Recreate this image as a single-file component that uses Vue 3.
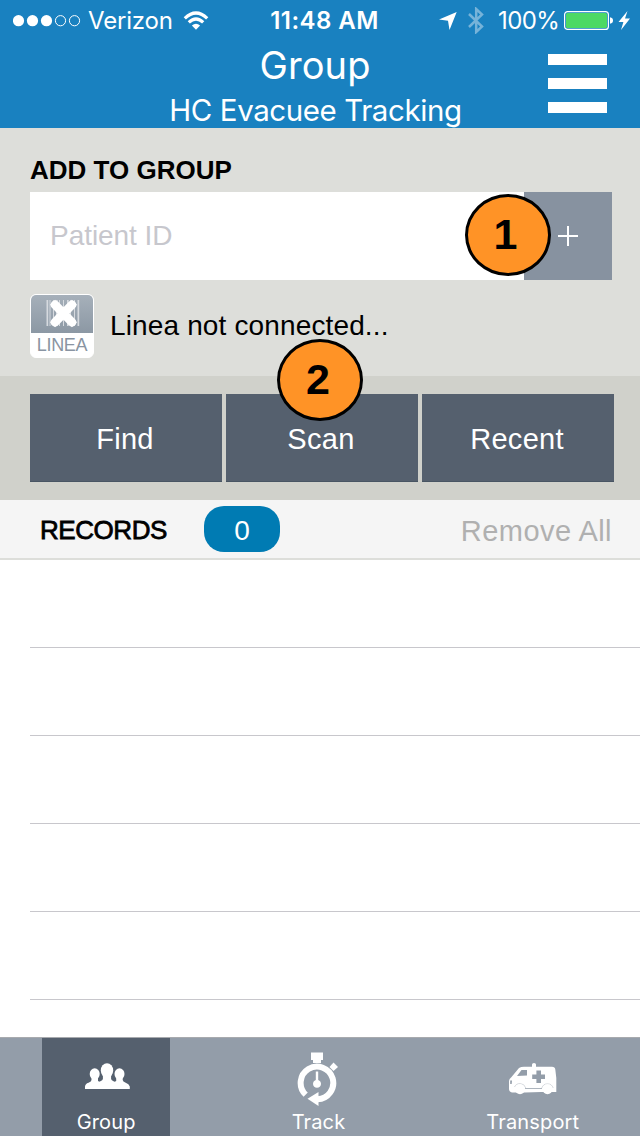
<script setup>
const actions = ['Find', 'Scan', 'Recent']
const bars = [46.5, 49.5, 53, 56, 59, 63, 67, 70, 74, 77.5]
</script>

<template>
  <div class="screen">
    <header class="header">
      <div class="status">
        <div class="left">
          <svg width="70" height="14" viewBox="0 0 70 14">
            <g fill="#fff"><circle cx="5.5" cy="6.7" r="5.6" /><circle cx="19.5" cy="6.7" r="5.6" /><circle cx="33.5" cy="6.7" r="5.6" /></g>
            <g fill="none" stroke="#fff"><circle cx="47.5" cy="6.7" r="5.1" /><circle cx="61.5" cy="6.7" r="5.1" /></g>
          </svg>
          <span class="carrier">Verizon</span>
          <svg class="wifi" width="26" height="20" viewBox="0 0 26 20">
            <g fill="none" stroke="#fff" stroke-width="3.2">
              <path d="M1.8 7.3Q13-3.4 24.2 7.3" /><path d="M5.8 11.4Q13 4.6 20.2 11.4" />
            </g>
            <path d="M8.9 14.5Q13 11 17.1 14.5L13 18.7Z" fill="#fff" />
          </svg>
        </div>
        <div class="time">11:48 AM</div>
        <div class="right">
          <svg width="18" height="18" viewBox="0 0 18 18"><path d="M17.7 0L10.5 18L9 8.8L0 7.5Z" fill="#fff" /></svg>
          <svg class="bt" width="16" height="27" viewBox="0 0 16 27"><path d="M1 7L14 19.5L8.2 25V2L14 7.5L1 20" fill="none" stroke="#76b3d9" stroke-width="2.5" /></svg>
          <span class="percent">100%</span>
          <svg class="battery" width="67" height="20" viewBox="0 0 67 20">
            <rect x=".6" y=".6" width="43.8" height="17.8" rx="3" fill="none" stroke="#fff" stroke-width="1.2" />
            <rect x="2" y="2" width="41" height="15" rx="1.5" fill="#4cd964" />
            <path d="M46 6.2Q49 6.8 49 9.5T46 12.8Z" fill="#fff" />
            <path d="M63.5 0L54.5 11H59.4L57 19L66 7.5H61Z" fill="#fff" />
          </svg>
        </div>
      </div>
      <h1>Group</h1>
      <h2>HC Evacuee Tracking</h2>
      <button class="menu" aria-label="Menu"><i></i><i></i><i></i></button>
    </header>

    <section class="add">
      <h3>ADD TO GROUP</h3>
      <div class="field">
        <span class="placeholder">Patient ID</span>
        <button class="plus" aria-label="Add">
          <svg width="20" height="20" viewBox="0 0 20 20"><path d="M0 10H20M10 0V20" stroke="#fff" stroke-width="2" /></svg>
        </button>
      </div>
      <div class="linea">
        <div class="device">
          <svg width="62" height="38" viewBox="31 295 62 38">
            <g fill="#d6dadf"><rect v-for="(x, i) in bars" :key="x" :x="x" y="300" :width="i % 3 ? 1 : 1.7" height="26" /></g>
            <path d="M55 304.8L72 322.2M72 304.8L55 322.2" stroke="#fff" stroke-width="8.8" stroke-linecap="round" />
            <path d="M55 304.8L72 322.2M72 304.8L55 322.2" stroke="#fff" stroke-width="7" stroke-linecap="square" />
          </svg>
          <span>LINEA</span>
        </div>
        <p>Linea not connected...</p>
      </div>
      <b class="marker one">1</b>
    </section>

    <section class="actions">
      <button v-for="a in actions" :key="a">{{ a }}</button>
      <b class="marker two">2</b>
    </section>

    <section class="records">
      <strong>RECORDS</strong><span class="count">0</span><span class="remove">Remove All</span>
    </section>

    <main class="list"><div v-for="n in 5" :key="n" class="row"></div></main>

    <nav class="tabs">
      <div class="tab active">
        <svg width="48" height="28" viewBox="84 1062 48 28">
          <g fill="#fff">
            <ellipse cx="94.7" cy="1074" rx="5" ry="5.8" />
            <ellipse cx="119.5" cy="1074" rx="5" ry="5.8" />
            <ellipse cx="107" cy="1070.5" rx="6.2" ry="7.3" />
            <path d="M91.5 1077H98V1081L102 1083V1089H85V1086.5Q85.3 1083.8 88.5 1082.8Q91.5 1081.8 91.5 1080Z" />
            <path d="M122.7 1077H116.2V1081L112.2 1083V1089H129.8V1086.5Q129 1083.8 125.7 1082.8Q122.7 1081.8 122.7 1080Z" />
            <path d="M102.9 1074H111.1V1079Q111.2 1080.5 114 1081.4Q118.5 1083 118.5 1089H95.5Q95.5 1083 100 1081.4Q102.8 1080.5 102.9 1079Z" />
          </g>
        </svg>
        <span>Group</span>
      </div>
      <div class="tab track">
        <svg width="42" height="56" viewBox="297 1051 42 56">
          <g fill="#fff">
            <path d="M311 1052.5H323V1060H321V1063H313V1060H311Z" />
            <path d="M333.5 1062.5L338 1067L333.5 1071L329.5 1067Z" />
            <path d="M318.5 1099.5V1106L307.5 1098.8L318.5 1092V1096Z" />
            <path d="M315.8 1071.5H318.2V1080Q321 1081 321 1084Q320.5 1087.8 317 1087.8T313 1084Q313 1081 315.8 1080Z" />
          </g>
          <path d="M305.7 1094.7A16.3 16.3 0 1 1 317.5 1099.2" fill="none" stroke="#fff" stroke-width="6" />
        </svg>
        <span>Track</span>
      </div>
      <div class="tab transport">
        <svg width="50" height="34" viewBox="508 1062 50 34">
          <path d="M519 1068Q521 1066.7 524 1066.7H532V1064.5Q532 1063 534 1063T536 1064.5V1066.7H552Q555 1066.7 555.3 1069.5L556.3 1078V1092H541L525 1092.5H512Q509 1091.5 509 1089V1081Q509 1079 511.5 1077Z" fill="#fff" />
          <path d="M517 1076L521.5 1070H527V1075.5ZM510.2 1080.5H512L511.7 1084H510.2ZM536.4 1070.5H541V1074.5H545V1079H541V1083H536.4V1079H532.2V1074.5H536.4ZM525 1088H542V1088.8H525Z" fill="#939da9" />
          <path d="M514.5 1087A6 6 0 0 1 525.7 1088M541.8 1088A6 6 0 0 1 553.2 1088" fill="none" stroke="#c3c9d0" stroke-width=".7" />
          <circle cx="520" cy="1089.3" r="5" fill="#fff" /><circle cx="547.5" cy="1089.3" r="5" fill="#fff" />
        </svg>
        <span>Transport</span>
      </div>
    </nav>
  </div>
</template>

<style>
body { margin: 0; }
</style>

<style scoped>
* { box-sizing: border-box; }
svg { display: block; flex: none; }
button { border: 0; border-radius: 0; padding: 0; margin: 0; }
h1, h2, h3, p { margin: 0; font-weight: 400; white-space: nowrap; }
.screen { width: 640px; height: 1136px; display: flex; flex-direction: column; overflow: hidden; background: #fff; font-family: "Liberation Sans", sans-serif; color: #000; }
.header { position: relative; height: 128px; flex: none; background: #1981c0; color: #fff; font-family: Inter, sans-serif; text-align: center; }
.status { height: 40px; display: grid; grid-template-columns: 240px 168px 232px; align-items: center; font-size: 24px; line-height: 40px; }
.left, .right { display: flex; align-items: center; }
.left { padding-left: 13px; }
.carrier { width: 96px; padding: 1px 0 0 5px; text-align: left; letter-spacing: -.2px; }
.wifi { margin-left: 4px; }
.time { font-weight: 600; letter-spacing: .45px; white-space: nowrap; padding: 1px 0 0 1px; }
.right { padding-left: 31px; }
.bt { margin-left: 11px; }
.percent { width: 64px; margin-left: 14px; padding-top: 1px; text-align: left; letter-spacing: -.6px; }
.battery { margin-left: 2px; }
h1 { height: 50px; line-height: 50px; font-size: 38px; letter-spacing: .1px; text-indent: -10px; }
h2 { height: 38px; line-height: 41px; font-size: 29.5px; letter-spacing: -.42px; text-indent: -9px; }
.menu { position: absolute; left: 548px; top: 54px; width: 59px; height: 59px; background: none; display: flex; flex-direction: column; justify-content: space-between; }
.menu i { width: 59px; height: 11px; background: #fff; }
.add { position: relative; height: 248px; flex: none; padding: 22px 28px 0 30px; background: #dddeda; }
h3 { height: 42px; line-height: 41px; font-size: 26px; font-weight: 700; letter-spacing: 0; }
.field { height: 88px; display: flex; justify-content: space-between; background: #fff; }
.placeholder { padding-left: 20px; line-height: 88px; font-size: 28px; color: #c7c7cd; letter-spacing: -.05px; }
.plus { width: 88px; display: flex; align-items: center; justify-content: center; background: #8792a0; }
.linea { display: flex; align-items: center; height: 64px; margin-top: 14px; gap: 16px; }
.device { width: 64px; height: 64px; border: 1px solid #fff; border-radius: 6px; background: #fff; overflow: hidden; }
.device svg { background: linear-gradient(#a6b0ba, #8c98a4); border-radius: 4px 4px 0 0; }
.device span { display: block; text-align: center; font-size: 18px; line-height: 24px; color: #8994a2; letter-spacing: -.3px; }
.linea p { font-size: 28px; line-height: 64px; letter-spacing: .14px; }
.marker { position: absolute; width: 86px; height: 82px; border: 3px solid #000; border-radius: 50%; background: #ff9326; text-align: center; font-size: 43px; line-height: 75px; }
.one { left: 465px; top: 66px; padding-right: 5px; }
.two { left: 277px; top: -37px; padding-right: 4px; }
.actions { position: relative; height: 124px; flex: none; display: flex; gap: 4px; padding: 18px 26px 18px 30px; background: #d0d1cb; }
.actions button { width: 192px; height: 88px; background: #55606e; border-bottom: 1px solid #485563; color: #fff; font: 29px/88px "Liberation Sans", sans-serif; letter-spacing: .3px; padding: 1px 2px 0 0; }
.records { height: 60px; flex: none; display: flex; align-items: center; padding: 0 28px 0 40px; background: #f5f5f5; border-bottom: 2px solid #dddeda; }
.records strong { width: 164px; font-size: 26px; font-weight: 400; -webkit-text-stroke: .8px #000; line-height: 58px; letter-spacing: -.45px; padding-top: 2px; }
.count { width: 76px; height: 46px; border-radius: 20px; background: #007bb3; color: #fff; text-align: center; font-size: 28px; line-height: 50px; }
.remove { margin-left: auto; font-size: 29px; line-height: 58px; padding-top: 3px; color: #b0b0b0; letter-spacing: .45px; }
.list { flex: 1; }
.row { height: 88px; margin-left: 30px; border-bottom: 1px solid #c8c7cc; }
.tabs { height: 99px; flex: none; display: flex; justify-content: space-around; background: #939da9; border-top: 1px solid #a8aaae; color: #fff; font-family: Inter, sans-serif; font-size: 20px; }
.tab { width: 128px; margin-left: -1px; display: flex; flex-direction: column; align-items: center; position: relative; }
.tab span { line-height: 24px; margin-top: auto; margin-bottom: 2px; letter-spacing: .15px; }
.active { background: #55606e; }
.active svg { margin: 24px 0 0 4px; }
.track { padding-right: 2px; }
.track svg { margin-top: 13px; }
.transport svg { margin-top: 24px; }
</style>
